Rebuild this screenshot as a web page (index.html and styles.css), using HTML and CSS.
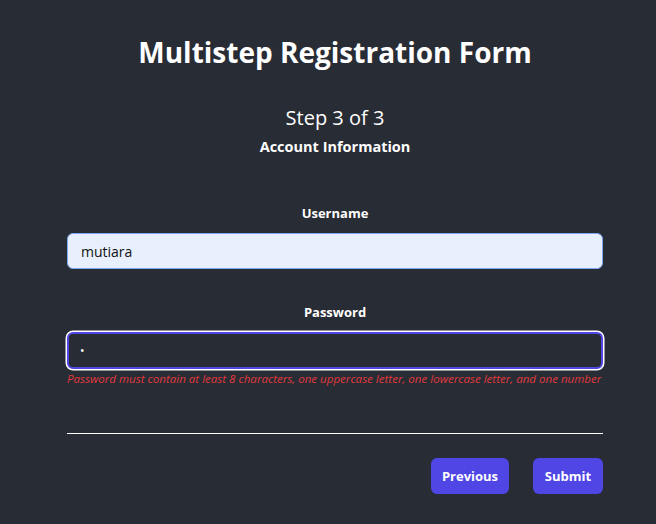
FILE: index.html
```html
<!DOCTYPE html>
<html>
<head>
<meta charset="utf-8">
<link rel="stylesheet" href="styles.css">
</head>
<body>
<main class="page">
  <h1 class="title">Multistep Registration Form</h1>
  <div class="step">Step 3 of 3</div>
  <h2 class="section">Account Information</h2>
  <form class="form">
    <div class="field">
      <label class="label">Username</label>
      <div class="input filled">mutiara</div>
    </div>
    <div class="field pw">
      <label class="label">Password</label>
      <div class="input focused"><span class="dot">•</span></div>
      <div class="error">Password must contain at least 8 characters, one uppercase letter, one lowercase letter, and one number</div>
    </div>
    <hr class="rule">
    <div class="actions">
      <button type="button" class="btn btn-prev">Previous</button>
      <button type="button" class="btn btn-submit">Submit</button>
    </div>
  </form>
</main>
</body>
</html>
```
FILE: styles.css
```css
html, body {
  margin: 0;
  padding: 0;
  background: #282c34;
  color: #ffffff;
  font-family: "Open Sans", "Noto Sans", "DejaVu Sans", sans-serif;
}
.page {
  width: 536px;
  margin-left: 67px;
  display: flex;
  flex-direction: column;
  align-items: stretch;
  padding-top: 32px;
}
.title {
  margin: 0;
  text-align: center;
  font-size: 28px;
  font-weight: 700;
  line-height: 40px;
}
.step {
  margin-top: 32px;
  text-align: center;
  font-size: 20px;
  line-height: 28px;
}
.section {
  margin: 5px 0 0;
  text-align: center;
  font-size: 14.5px;
  font-weight: 700;
  line-height: 20px;
}
.form {
  margin-top: 47px;
  display: flex;
  flex-direction: column;
}
.field {
  display: flex;
  flex-direction: column;
}
.pw { margin-top: 34px; }
.label {
  text-align: center;
  font-size: 13px;
  font-weight: 700;
  line-height: 18px;
  margin-bottom: 11px;
}
.input {
  box-sizing: border-box;
  height: 36px;
  border-radius: 6px;
  display: flex;
  align-items: center;
  padding: 0 13px;
  font-size: 14px;
}
.filled {
  background: #e8f0fe;
  border: 1px solid #7aa7f0;
  color: #111111;
}
.focused {
  background: #282c34;
  border: 2px solid #4f46e5;
  box-shadow: 0 0 0 1.5px #ffffff;
  height: 37px;
  padding-left: 11px;
}
.dot {
  color: #ffffff;
  font-size: 12px;
  line-height: 1;
}
.error {
  margin-top: 3px;
  color: #e0393e;
  font-style: italic;
  font-size: 11.55px;
  line-height: 14px;
  white-space: nowrap;
}
.rule {
  margin: 47px 0 0;
  border: none;
  border-top: 1px solid #ffffff;
  height: 0;
}
.actions {
  margin-top: 24px;
  display: flex;
  justify-content: flex-end;
  gap: 24px;
}
.btn {
  box-sizing: border-box;
  height: 36px;
  padding: 0;
  border: none;
  border-radius: 6px;
  background: #4f46e5;
  color: #ffffff;
  font-family: inherit;
  font-size: 13px;
  font-weight: 700;
}
.btn-prev { width: 78px; }
.btn-submit { width: 70px; }
```
